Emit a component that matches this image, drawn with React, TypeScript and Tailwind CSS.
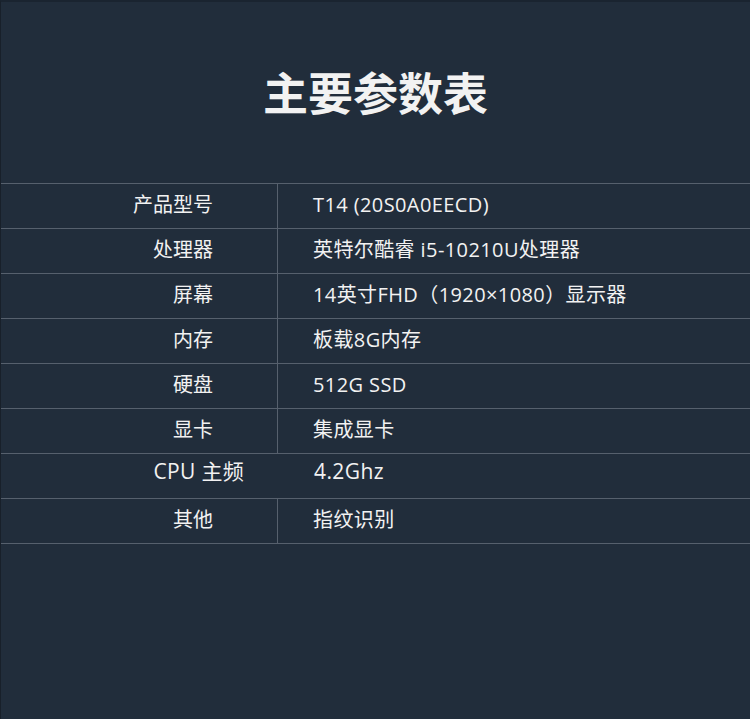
const rows: { label: string; value: string; split?: boolean }[] = [
  { label: "产品型号", value: "T14 (20S0A0EECD)" },
  { label: "处理器", value: "英特尔酷睿 i5-10210U处理器" },
  { label: "屏幕", value: "14英寸FHD（1920×1080）显示器" },
  { label: "内存", value: "板载8G内存" },
  { label: "硬盘", value: "512G SSD" },
  { label: "显卡", value: "集成显卡" },
  { label: "CPU 主频", value: "4.2Ghz", split: true },
  { label: "其他", value: "指纹识别" },
];

const App = () => {
  return (
    <div
      className="w-[750px] h-[719px] bg-[#212d3b] text-[#f2f2f2] border-t-2 border-t-[#1a2430] border-l border-l-[#18202a] overflow-hidden"
      style={{ fontFamily: '"Open Sans", "Noto Sans CJK SC", sans-serif' }}
    >
      <div className="h-[181px] flex items-center justify-center pb-[2px]">
        <h1
          className="text-[45px] font-bold leading-none"
          style={{ fontFamily: '"Noto Sans CJK SC", sans-serif' }}
        >
          主要参数表
        </h1>
      </div>
      <div className="border-t border-[#56606d]">
        {rows.map((r) =>
          r.split ? (
            <div key={r.label} className="flex h-[45px] border-b border-[#56606d] items-center pb-[9px] text-[21px]">
              <div className="w-[277px] text-right pr-[34px] tracking-[0.3px]">{r.label}</div>
              <div className="pl-[36px] tracking-[0.4px]">{r.value}</div>
            </div>
          ) : (
            <div key={r.label} className="flex h-[45px] border-b border-[#56606d] text-[20px]">
              <div className="w-[277px] border-r border-[#56606d] flex items-center justify-end pr-[64px] pb-[2px]">
                {r.label}
              </div>
              <div className="flex items-center pl-[35px] pb-[2px] tracking-[0.4px]">{r.value}</div>
            </div>
          )
        )}
      </div>
    </div>
  );
};

export default App;
